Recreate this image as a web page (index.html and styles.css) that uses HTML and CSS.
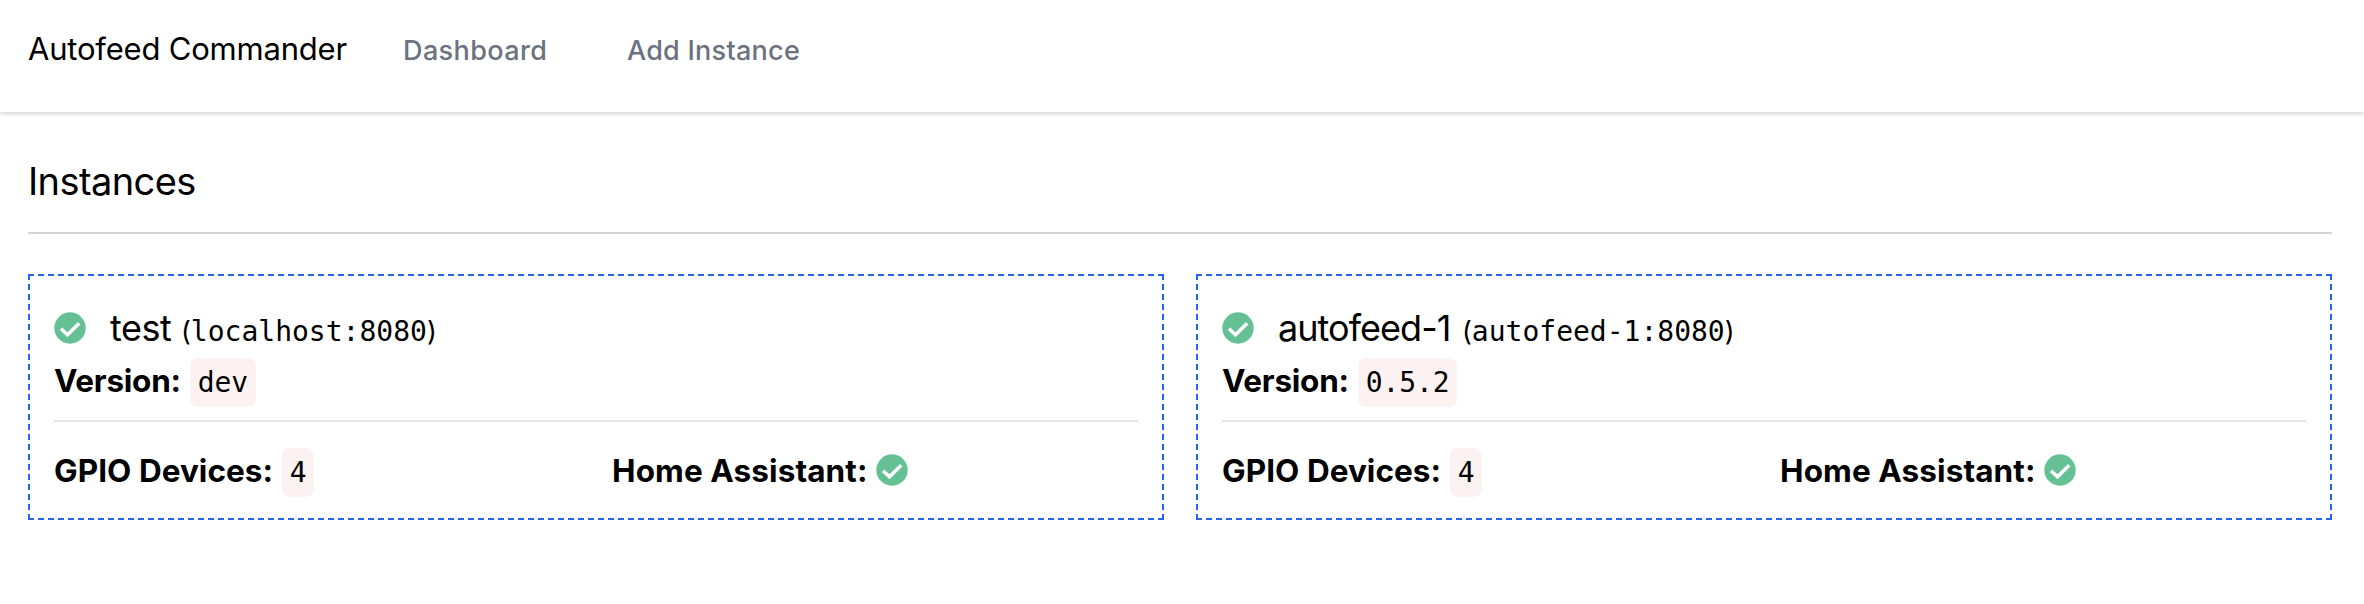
FILE: index.html
```html
<!DOCTYPE html>
<html lang="en">
<head>
<meta charset="utf-8">
<title>Autofeed Commander</title>
<link rel="stylesheet" href="styles.css">
</head>
<body>
<svg class="defs" aria-hidden="true"><symbol id="check" viewBox="0 0 32 32"><circle cx="16" cy="16" r="15.7" fill="#65c194"/><path d="M7 16.8 L13.5 22.8 L25.2 11.2" fill="none" stroke="#fff" stroke-width="3.4"/></symbol></svg>
<nav class="nav">
  <span class="brand">Autofeed Commander</span>
  <a class="link dashboard">Dashboard</a>
  <a class="link add">Add Instance</a>
</nav>
<main class="main">
  <h1 class="heading">Instances</h1>
  <div class="cards">
    <section class="card">
      <div class="title"><svg class="icon"><use href="#check"/></svg><h2 class="name name-test">test</h2><span class="host"><i>(</i>localhost:8080<i>)</i></span></div>
      <div class="field version"><b class="label-version">Version:</b><code class="chip">dev</code></div>
      <div class="stats">
        <div class="field"><b class="label-gpio">GPIO Devices:</b><code class="chip">4</code></div>
        <div class="field"><b class="label-home">Home Assistant:</b><svg class="icon"><use href="#check"/></svg></div>
      </div>
    </section>
    <section class="card">
      <div class="title"><svg class="icon"><use href="#check"/></svg><h2 class="name name-auto">autofeed-1</h2><span class="host"><i>(</i>autofeed-1:8080<i>)</i></span></div>
      <div class="field version"><b class="label-version">Version:</b><code class="chip">0.5.2</code></div>
      <div class="stats">
        <div class="field"><b class="label-gpio">GPIO Devices:</b><code class="chip">4</code></div>
        <div class="field"><b class="label-home">Home Assistant:</b><svg class="icon"><use href="#check"/></svg></div>
      </div>
    </section>
  </div>
</main>
</body>
</html>
```

FILE: styles.css
```css
* { box-sizing: border-box; margin: 0; padding: 0; }
body { font-family: Inter, "Liberation Sans", sans-serif; color: #000; background: #fff; }
.defs { display: block; width: 0; height: 0; }
.nav { display: flex; align-items: baseline; height: 112px; padding: 25px 28px 0; box-shadow: 0 2px 6px rgba(0,0,0,.1), 0 2px 4px rgba(0,0,0,.08); white-space: nowrap; }
.brand { width: 375px; font-size: 31px; line-height: 48px; letter-spacing: -.2px; }
.link { color: #6b7280; font-size: 27px; font-weight: 500; }
.dashboard { width: 224px; letter-spacing: .4px; }
.add { letter-spacing: .25px; }
.main { padding: 40px 32px 0 28px; }
.heading { height: 82px; border-bottom: 2px solid #d1d5db; font-size: 38px; line-height: 58px; font-weight: 400; letter-spacing: -.6px; }
.cards { display: grid; grid-template-columns: 1fr 1fr; gap: 32px; margin-top: 40px; }
.card { height: 246px; border: 2px dashed #2563eb; padding: 26px 24px 0; }
.title { display: flex; align-items: baseline; height: 56px; line-height: 52px; white-space: nowrap; }
.icon { flex: none; align-self: flex-start; display: block; width: 32px; height: 32px; }
.title .icon { margin: 10px 24px 0 0; }
.name { font-size: 36px; font-weight: 400; letter-spacing: -.7px; }
.name-test { width: 71px; letter-spacing: -.5px; }
.name-auto { width: 184px; letter-spacing: -.95px; }
.host { font-family: "DejaVu Sans Mono", monospace; font-size: 28px; }
.host i { font-family: Inter, sans-serif; font-style: normal; font-size: 27px; }
.field { display: flex; align-items: flex-start; white-space: nowrap; }
.field b { font-size: 31.5px; line-height: 46px; font-weight: 700; }
.label-version { width: 136px; letter-spacing: -.25px; }
.label-gpio { width: 228px; letter-spacing: .05px; }
.label-home { width: 264px; letter-spacing: .1px; }
.field .icon { margin-top: 6px; }
.chip { height: 49px; padding: 0 7.7px; border-radius: 8px; background: #fcf2f2; font-family: "DejaVu Sans Mono", monospace; font-size: 28px; line-height: 49px; letter-spacing: -.1px; }
.version { height: 64px; border-bottom: 2px solid #e5e7eb; }
.stats { display: grid; grid-template-columns: 1fr 1fr; gap: 32px; padding-top: 26px; }
```
